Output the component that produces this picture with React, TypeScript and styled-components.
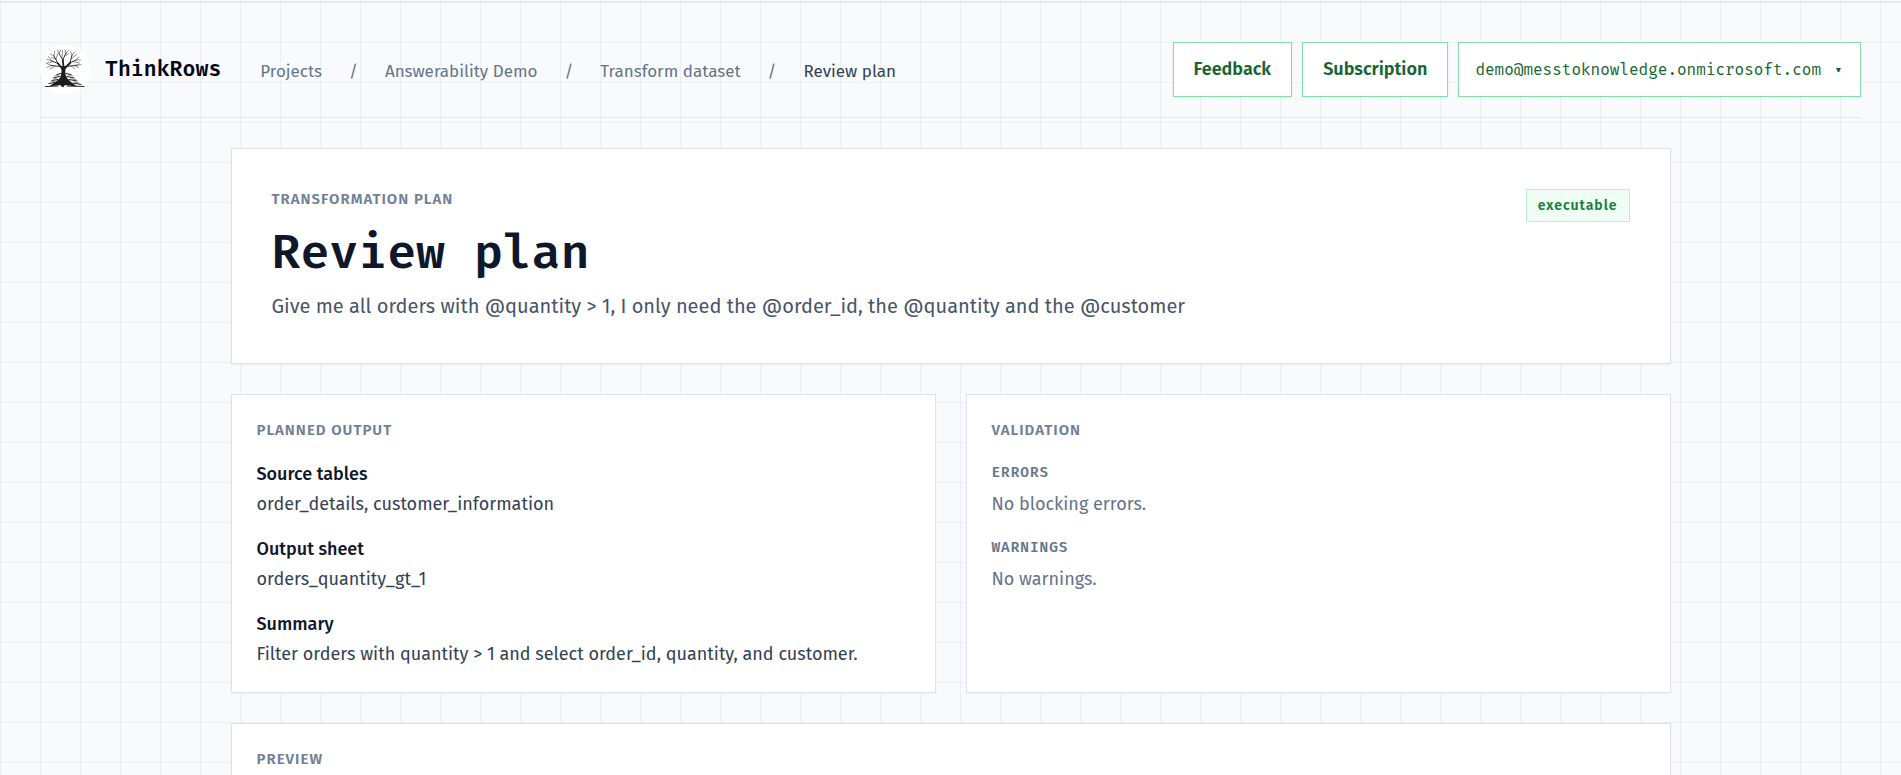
import React from "react";
import styled, { createGlobalStyle } from "styled-components";

const sans = `"Fira Sans", Roboto, "Liberation Sans", sans-serif`;
const mono = `"Fira Mono", "Liberation Mono", monospace`;
const display = `"Fira Code", "Fira Mono", "Liberation Mono", monospace`;

const GlobalStyle = createGlobalStyle`
  *, *::before, *::after {
    box-sizing: border-box;
  }

  body {
    margin: 0;
    min-height: 100vh;
    background: #f8fafc;
    color: #0f172a;
    font-family: ${sans};
    font-size: 18px;
    line-height: 27px;
  }

  h1, h2, h3, p, ol, dl, dd {
    margin: 0;
    padding: 0;
  }
`;

const Page = styled.div`
  min-height: 100vh;
  margin-top: 1px;
  padding: 40px 40px 60px;
  border-top: 1px solid #dfe3ea;
  background-image:
    linear-gradient(rgba(148, 163, 184, 0.13) 1px, transparent 1px),
    linear-gradient(90deg, rgba(148, 163, 184, 0.13) 1px, transparent 1px);
  background-size: 40px 40px;
`;

const Header = styled.header`
  display: flex;
  align-items: center;
  justify-content: space-between;
  gap: 40px;
  padding-bottom: 20px;
  border-bottom: 1px solid #e2e8f0;
`;

const HeaderGroup = styled.div`
  display: flex;
  align-items: center;
  gap: 39px;
`;

const Brand = styled.a`
  display: flex;
  align-items: center;
  gap: 15px;
  color: #020617;
  font-family: ${display};
  font-size: 21px;
  font-weight: 600;
  text-decoration: none;
`;

const LogoMark = styled.svg`
  width: 50px;
  height: 50px;
  flex: none;
`;

const Crumbs = styled.ol`
  display: flex;
  padding-top: 4px;
  font-size: 17px;
  list-style: none;
`;

const Crumb = styled.li`
  display: flex;
  color: #334155;

  & + &::before {
    content: "/";
    margin: 0 27px;
    color: #64748b;
  }
`;

const CrumbLink = styled.a`
  color: #64748b;
  text-decoration: none;
`;

const Actions = styled.div`
  display: flex;
  gap: 10px;
`;

const ActionButton = styled.button`
  display: flex;
  align-items: center;
  height: 55px;
  padding: 0 20px 2px;
  border: 1px solid #86dcaa;
  background: #fff;
  color: #166534;
  font-family: ${sans};
  font-size: 18px;
  font-weight: 600;
  box-shadow: 0 1px 2px rgba(22, 101, 52, 0.08);
  cursor: pointer;
`;

const AccountButton = styled(ActionButton)`
  gap: 13px;
  padding: 0 16px;
  font-family: ${mono};
  font-size: 16px;
  font-weight: 400;
`;

const Caret = styled.svg`
  width: 10px;
  height: 6px;
`;

const Content = styled.main`
  display: grid;
  gap: 30px;
  max-width: 1440px;
  margin: 30px auto 0;
`;

const Columns = styled.div`
  display: grid;
  grid-template-columns: 1fr 1fr;
  gap: 30px;
`;

const Card = styled.section`
  padding: 25px 25px 24px;
  border: 1px solid #dde3eb;
  background: #fff;
  box-shadow: 0 1px 2px rgba(15, 23, 42, 0.05);
`;

const HeroCard = styled(Card)`
  display: flex;
  align-items: flex-start;
  justify-content: space-between;
  padding: 40px;
`;

const Eyebrow = styled.p`
  color: #718096;
  font-size: 15px;
  font-weight: 600;
  line-height: 20px;
  letter-spacing: 1px;
  text-transform: uppercase;
`;

const CardTitle = styled(Eyebrow).attrs({ as: "h2" })`
  margin-bottom: 21px;
`;

const Title = styled.h1`
  margin: 15px 0 5px;
  font-family: ${display};
  font-size: 47px;
  font-weight: 600;
  line-height: 60px;
`;

const Prompt = styled.p`
  color: #475569;
  font-size: 20px;
  line-height: 34px;
`;

const Badge = styled.span`
  padding: 4px 11px;
  border: 1px solid #bbf0d0;
  background: #f0fdf4;
  color: #15803d;
  font-size: 14px;
  font-weight: 600;
  line-height: 23px;
  letter-spacing: 1px;
`;

const Stack = styled.div`
  display: grid;
  gap: 18px;
`;

const FactName = styled.dt`
  margin-bottom: 3px;
  font-weight: 500;
`;

const FactValue = styled.dd`
  color: #334155;
`;

const CheckTitle = styled.h3`
  margin-bottom: 6px;
  color: #64748b;
  font-family: ${display};
  font-size: 14px;
  font-weight: 600;
  line-height: 24px;
  letter-spacing: 1px;
  text-transform: uppercase;
`;

const CheckText = styled.p`
  color: #64748b;
`;

const PreviewCard = styled(Card)`
  min-height: 300px;
`;

const crumbs = ["Projects", "Answerability Demo", "Transform dataset"];

const facts = [
  ["Source tables", "order_details, customer_information"],
  ["Output sheet", "orders_quantity_gt_1"],
  ["Summary", "Filter orders with quantity > 1 and select order_id, quantity, and customer."],
];

const checks = [
  ["Errors", "No blocking errors."],
  ["Warnings", "No warnings."],
];

function TreeLogo() {
  return (
    <LogoMark viewBox="0 0 50 50" aria-hidden="true">
      <circle cx="25" cy="25" r="25" fill="#fff" />
      <g fill="none" stroke="#1c1c1c" strokeLinecap="round">
        <path strokeWidth="1.8" d="M22.5 24 L18 18.5 M23.5 22 L22.8 15 M24 24 L30 18" />
        <path
          strokeWidth="0.9"
          d="M18 18.5 L12 16 M18 18.5 L14 11 M22.8 15 L19 8.5 M22.8 15 L26 8 M30 18 L36 15 M30 18 L32 10 M20.5 21.5 L11 20.5 M26.5 21.5 L38 20"
        />
        <path
          strokeWidth="0.6"
          stroke="#444"
          d="M12 16 L7 14.5 M12 16 L8.5 11.5 M14 11 L10.5 9 M14 11 L14.5 6.5 M15.5 14 L11.5 12.5 M16 14.5 L17.5 9 M19 8.5 L17.5 5 M19 8.5 L20.5 5 M22 12.5 L22.5 5.5 M26 8 L25 5 M26 8 L29 5 M25 11 L28.5 8.5 M32 10 L30.5 6.5 M32 10 L35 7 M31.5 13.5 L36.5 9.5 M36 15 L39 12 M36 15 L40.5 15 M33 16.5 L39.5 18 M38 20 L41 19.5 M34 20.5 L38.5 22.5 M11 20.5 L6 18 M11 20.5 L7 22.5 M15 21 L10 24 M31 21 L34.5 23.5 M13 16.5 L7.5 18"
        />
      </g>
      <path
        fill="#1c1c1c"
        d="M21 21 L26 21 Q24.6 27 26 31 Q27 34 31 37 L37 41.5 L25 40 L23 42.5 L20 40 L9 41.5 L16 36.5 Q20.5 33.5 21 30 Q22 26 21 21 Z"
      />
      <g fill="none" stroke="#2a2a2a" strokeWidth="1.2" strokeLinecap="round">
        <path d="M17 29.5 L21 28.5 M26 28.5 L31 29.5 M14 32.5 L20 31.5 M27 31.5 L34 33 M12 35.5 L18 34.5 M29 34.5 L37 36 M9 38.5 L15 37.5 M33 38 L41 39.5 M5.5 41.5 L18 41 M27 41 L44 41.5" />
        <path strokeWidth="0.8" stroke="#777" d="M15 31 L19 30 M28 30 L33 31 M13 34 L17 33 M31 34 L36 34.5 M11 37 L16 36 M34 37 L39 38" />
      </g>
    </LogoMark>
  );
}

export default function App() {
  return (
    <>
      <GlobalStyle />
      <Page>
        <Header>
          <HeaderGroup>
            <Brand href="#">
              <TreeLogo />
              ThinkRows
            </Brand>
            <nav aria-label="Breadcrumb">
              <Crumbs>
                {crumbs.map((name) => (
                  <Crumb key={name}>
                    <CrumbLink href="#">{name}</CrumbLink>
                  </Crumb>
                ))}
                <Crumb aria-current="page">Review plan</Crumb>
              </Crumbs>
            </nav>
          </HeaderGroup>
          <Actions>
            <ActionButton type="button">Feedback</ActionButton>
            <ActionButton type="button">Subscription</ActionButton>
            <AccountButton type="button" aria-haspopup="menu">
              demo@messtoknowledge.onmicrosoft.com
              <Caret viewBox="0 0 10 6" aria-hidden="true">
                <path d="M2 1 H7 L5.2 5 H3.8 Z" fill="#166534" />
              </Caret>
            </AccountButton>
          </Actions>
        </Header>

        <Content>
          <HeroCard>
            <div>
              <Eyebrow>Transformation plan</Eyebrow>
              <Title>Review plan</Title>
              <Prompt>
                Give me all orders with @quantity &gt; 1, I only need the @order_id, the @quantity
                and the @customer
              </Prompt>
            </div>
            <Badge>executable</Badge>
          </HeroCard>

          <Columns>
            <Card>
              <CardTitle>Planned output</CardTitle>
              <Stack as="dl">
                {facts.map(([name, value]) => (
                  <div key={name}>
                    <FactName>{name}</FactName>
                    <FactValue>{value}</FactValue>
                  </div>
                ))}
              </Stack>
            </Card>
            <Card>
              <CardTitle>Validation</CardTitle>
              <Stack>
                {checks.map(([name, text]) => (
                  <div key={name}>
                    <CheckTitle>{name}</CheckTitle>
                    <CheckText>{text}</CheckText>
                  </div>
                ))}
              </Stack>
            </Card>
          </Columns>

          <PreviewCard>
            <CardTitle>Preview</CardTitle>
          </PreviewCard>
        </Content>
      </Page>
    </>
  );
}
